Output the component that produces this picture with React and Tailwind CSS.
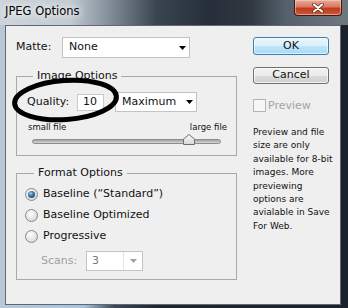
const Arrow = ({ color = "#000" }) => (
  <svg width="7" height="4" viewBox="0 0 7 4" className="shrink-0">
    <path d="M0 0H7L3.5 4Z" fill={color} />
  </svg>
);

function Radio({ checked }) {
  return (
    <span className="w-[13px] h-[13px] rounded-full border border-[#8a8a8a] bg-[radial-gradient(circle_at_40%_35%,#ffffff_0%,#e4e4e4_55%,#cbcbcb_100%)] flex items-center justify-center shrink-0">
      {checked && (
        <span className="w-[7px] h-[7px] rounded-full bg-[radial-gradient(circle_at_40%_35%,#a6d0f2_0%,#2f6eab_45%,#153d6b_100%)]" />
      )}
    </span>
  );
}

export default function App() {
  return (
    <div className="relative w-[348px] h-[308px] overflow-hidden flex flex-col font-['DejaVu_Sans',sans-serif] text-[11px] text-[#111]">
      {/* title bar */}
      <div className="h-[25px] shrink-0 flex justify-between pl-[5px] pr-[6px] bg-[linear-gradient(90deg,#cdd4da_0%,#c3cbd2_20%,#8a959f_30%,#3a4550_45%,#262f39_60%,#2f3841_72%,#56606a_82%,#6f787f_100%)]">
        <span className="pt-[5px] text-[11.5px] leading-[13px] text-black [text-shadow:0_0_6px_#fff,0_0_10px_#fff]">
          JPEG Options
        </span>
        <div className="w-[48px] h-[16px] rounded-b-[4px] border border-t-0 border-[#3d1a12] bg-[linear-gradient(#e9a896_0%,#d77a64_45%,#c2391d_55%,#cc5a3c_100%)] shadow-[inset_0_0_0_1px_rgba(255,220,210,0.5)] flex items-center justify-center">
          <svg width="12" height="10" viewBox="0 0 12 10">
            <path d="M2 1.5L10 8.5M10 1.5L2 8.5" stroke="#5a1d10" strokeWidth="3.6" strokeLinecap="round" />
            <path d="M2 1.5L10 8.5M10 1.5L2 8.5" stroke="#fff" strokeWidth="2.2" strokeLinecap="round" />
          </svg>
        </div>
      </div>

      {/* body frame */}
      <div className="flex-1 flex pl-[5px] pr-[7px] pb-[3px] bg-[linear-gradient(90deg,#b9c8d6_0%,#abc3da_24%,#3c4755_33%,#20272f_45%,#1b222b_100%)]">
        <div className="flex-1 border border-[#5f6973] bg-[#efefef] flex gap-[16px] pl-[10px] pt-[11px]">
          {/* left column */}
          <div className="w-[221px] flex flex-col">
            <div className="flex items-center h-[21px]">
              <span className="w-[46px]">Matte:</span>
              <div className="w-[128px] h-[21px] bg-white border border-[#c3c3c3] flex items-center justify-between pl-[6px] pr-[3px]">
                <span>None</span>
                <Arrow />
              </div>
            </div>

            <fieldset className="mt-[10px] border border-[#a9a9a9] pb-[8px]">
              <legend className="ml-[16px] px-[4px] leading-[16px]">Image Options</legend>
              <div className="mt-[8px] flex items-center h-[20px] pl-[10px]">
                <span className="w-[50px]">Quality:</span>
                <div className="w-[27px] h-[17px] bg-white border border-[#c9c9c9] flex items-center pl-[5px]">10</div>
                <div className="ml-[11px] w-[82px] h-[20px] bg-white border border-[#c3c3c3] flex items-center justify-between pl-[6px] pr-[3px]">
                  <span>Maximum</span>
                  <Arrow />
                </div>
              </div>
              <div className="mt-[10px] flex justify-between pl-[11px] pr-[9px] text-[8.5px] leading-[11px]">
                <span>small file</span>
                <span>large file</span>
              </div>
              <div className="relative ml-[15px] w-[189px] h-[12px] mt-[2px] flex items-center">
                <div className="w-full h-[5px] rounded-full border border-[#8d8d8d] bg-[linear-gradient(#9f9f9f,#d8d8d8)]" />
                <svg width="12" height="11" viewBox="0 0 12 11" className="absolute left-[151px] top-[-1px]">
                  <defs>
                    <linearGradient id="th" x1="0" y1="0" x2="0" y2="1">
                      <stop offset="0" stopColor="#fbfbfb" />
                      <stop offset="1" stopColor="#d6d6d6" />
                    </linearGradient>
                  </defs>
                  <path d="M6 0.5L11.5 5V10.5H0.5V5Z" fill="url(#th)" stroke="#6e6e6e" strokeWidth="1" />
                </svg>
              </div>
            </fieldset>

            <fieldset className="mt-[9px] border border-[#a9a9a9] pb-[8px]">
              <legend className="ml-[17px] px-[4px] leading-[16px]">Format Options</legend>
              <div className="mt-[3px] flex flex-col">
                <div className="h-[21px] flex items-center pl-[8px] gap-[5px]">
                  <Radio checked />
                  <span>Baseline (“Standard”)</span>
                </div>
                <div className="h-[21px] flex items-center pl-[8px] gap-[5px]">
                  <Radio />
                  <span>Baseline Optimized</span>
                </div>
                <div className="h-[21px] flex items-center pl-[8px] gap-[5px]">
                  <Radio />
                  <span>Progressive</span>
                </div>
                <div className="mt-[4px] h-[20px] flex items-center pl-[24px]">
                  <span className="w-[45px] text-[#a0a0a0]">Scans:</span>
                  <div className="w-[57px] h-[20px] border border-[#c4c4c4] bg-white flex">
                    <span className="flex-1 flex items-center pl-[5px] text-[#777]">3</span>
                    <span className="w-[19px] border-l border-[#e4e4e4] flex items-center justify-center">
                      <Arrow color="#a0a0a0" />
                    </span>
                  </div>
                </div>
              </div>
            </fieldset>
          </div>

          {/* right column */}
          <div className="w-[76px] flex flex-col">
            <div className="h-[18px] rounded-[3px] border border-[#3c7fb1] bg-[linear-gradient(#eaf6fd_0%,#d9f0fc_50%,#bee6fd_50%,#a7d9f5_100%)] shadow-[inset_0_0_0_1px_rgba(255,255,255,0.6)] flex items-center justify-center">
              OK
            </div>
            <div className="mt-[12px] h-[17px] rounded-[3px] border border-[#707070] bg-[linear-gradient(#f2f2f2_0%,#ebebeb_50%,#dddddd_50%,#cfcfcf_100%)] shadow-[inset_0_0_0_1px_rgba(255,255,255,0.7)] flex items-center justify-center">
              Cancel
            </div>
            <div className="mt-[15px] h-[13px] flex items-center gap-[2px]">
              <span className="w-[13px] h-[13px] border border-[#b5b5b5] bg-[#f7f7f7] shrink-0" />
              <span className="text-[#a3a3a3] leading-[13px]">Preview</span>
            </div>
            <div className="mt-[14px] text-[9px] leading-[13.4px] whitespace-nowrap">
              Preview and file
              <br />
              size are only
              <br />
              available for 8-bit
              <br />
              images. More
              <br />
              previewing
              <br />
              options are
              <br />
              avialable in Save
              <br />
              For Web.
            </div>
          </div>
        </div>
      </div>

      {/* hand-drawn ellipse annotation */}
      <svg className="absolute left-0 top-0 pointer-events-none" width="348" height="308" viewBox="0 0 348 308">
        <ellipse cx="65.5" cy="100" rx="51" ry="19.5" fill="none" stroke="#000" strokeWidth="5" transform="rotate(-4 65.5 100)" />
      </svg>
    </div>
  );
}
